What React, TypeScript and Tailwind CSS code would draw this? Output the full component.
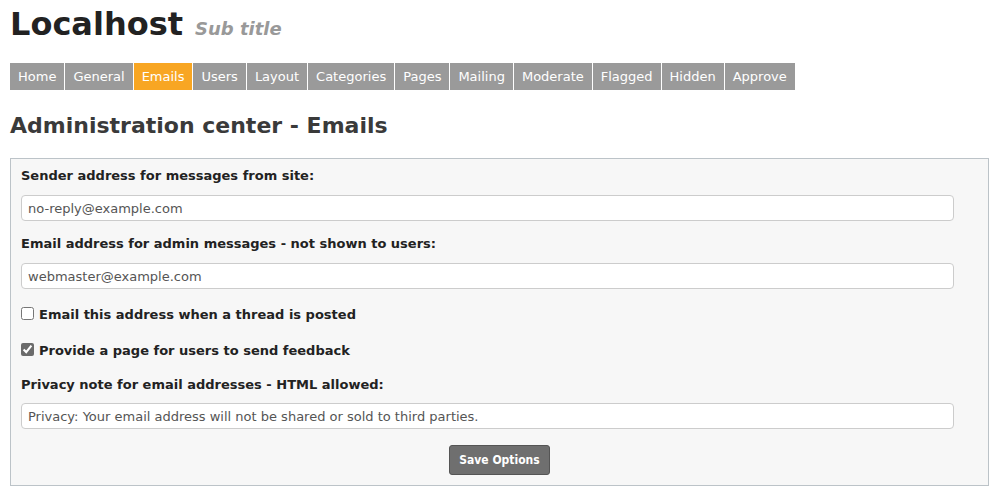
import React from 'react';

const tabs = ['Home', 'General', 'Emails', 'Users', 'Layout', 'Categories', 'Pages', 'Mailing', 'Moderate', 'Flagged', 'Hidden', 'Approve'];

const TextField = ({ value }: { value: string }) => (
  <input
    type="text"
    defaultValue={value}
    className="block w-[933px] h-[26px] px-[6px] bg-white border border-[#cccccc] rounded-[4px] text-[13px] text-[#555555] outline-none"
  />
);

const App = () => {
  return (
    <div className="min-h-[496px] bg-white text-[#222] font-['DejaVu_Sans',Verdana,sans-serif] px-[10px] pt-[2px]">
      <div className="flex items-baseline">
        <h1 className="text-[32px] font-bold text-[#222] leading-[44px]">Localhost</h1>
        <span className="ml-[12px] text-[18px] font-bold italic text-[#999999]">Sub title</span>
      </div>

      <nav className="mt-[17px] flex">
        {tabs.map((tab) => (
          <a
            key={tab}
            href="#"
            className={`h-[27px] leading-[27px] pl-[8px] pr-[8px] mr-[1px] text-[13px] text-white ${tab === 'Emails' ? 'bg-[#f8a623]' : 'bg-[#9a9a9a]'}`}
          >
            {tab}
          </a>
        ))}
      </nav>

      <h2 className="mt-[21px] text-[22px] font-bold text-[#3a3a3a] leading-[30px]">Administration center - Emails</h2>

      <form className="mt-[17px] w-[979px] h-[328px] bg-[#f7f7f7] border border-[#bcc3c8] px-[10px] pt-[8px]">
        <label className="block text-[13px] font-bold leading-[18px]">Sender address for messages from site:</label>
        <div className="mt-[10px]">
          <TextField value="no-reply@example.com" />
        </div>

        <label className="block mt-[14px] text-[13px] font-bold leading-[18px]">Email address for admin messages - not shown to users:</label>
        <div className="mt-[10px]">
          <TextField value="webmaster@example.com" />
        </div>

        <label className="flex items-center mt-[17px] text-[13px] font-bold leading-[18px]">
          <input type="checkbox" className="w-[13px] h-[13px] mr-[5px] -mt-[4px]" />
          Email this address when a thread is posted
        </label>

        <label className="flex items-center mt-[18px] text-[13px] font-bold leading-[18px]">
          <input type="checkbox" defaultChecked className="w-[13px] h-[13px] mr-[5px] -mt-[4px] accent-[#6b6b6b]" />
          Provide a page for users to send feedback
        </label>

        <label className="block mt-[16px] text-[13px] font-bold leading-[18px]">Privacy note for email addresses - HTML allowed:</label>
        <div className="mt-[9px]">
          <TextField value="Privacy: Your email address will not be shared or sold to third parties." />
        </div>

        <div className="flex justify-center mt-[16px]">
          <button
            type="button"
            className="h-[30px] px-[9px] bg-[#6f6f6f] border border-[#555] rounded-[3px] text-white text-[12px] font-bold font-['DejaVu_Sans_Condensed','DejaVu_Sans',sans-serif]"
          >
            Save Options
          </button>
        </div>
      </form>
    </div>
  );
};

export default App;
